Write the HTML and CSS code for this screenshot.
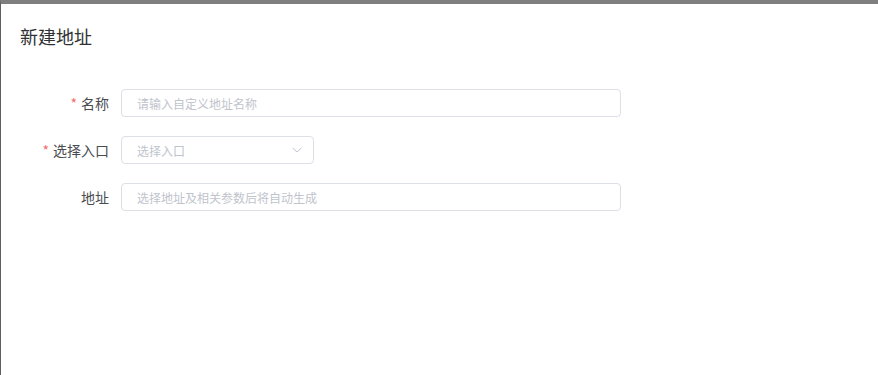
FILE: index.html
```html
<!DOCTYPE html>
<html lang="zh-CN">
  <head>
    <meta charset="UTF-8" />
    <title>新建地址</title>
    <link rel="stylesheet" href="styles.css">
  </head>
  <body>
    <div class="dialog">
      <div class="dialog-header">新建地址</div>
      <div class="dialog-body">
        <div class="form-item">
          <label class="form-label required">名称</label>
          <div class="input input-wide">
            <span class="placeholder">请输入自定义地址名称</span>
          </div>
        </div>

        <div class="form-item">
          <label class="form-label required">选择入口</label>
          <div class="input input-select">
            <span class="placeholder">选择入口</span>
            <svg class="arrow" width="12" height="12" viewBox="0 0 12 12">
              <polyline points="1.5,4 6,8 10.5,4" fill="none" stroke="#c0c4cc" stroke-width="1" />
            </svg>
          </div>
        </div>

        <div class="form-item">
          <label class="form-label">地址</label>
          <div class="input input-wide">
            <span class="placeholder">选择地址及相关参数后将自动生成</span>
          </div>
        </div>
      </div>
    </div>
  </body>
</html>
```

FILE: styles.css
```css
* {
  box-sizing: border-box;
  margin: 0;
  padding: 0;
}

html,
body {
  height: 100%;
}

body {
  font-family: "Noto Sans CJK SC", "Noto Sans", sans-serif;
  background: #ffffff;
  color: #303133;
}

.dialog {
  height: 100%;
  background: #ffffff;
  border-top: 4px solid #7f7f7f;
  border-left: 1px solid #5e5e5e;
}

.dialog-header {
  padding: 20px 19px;
  font-size: 18px;
  line-height: 24px;
  color: #303133;
}

.dialog-body {
  padding-top: 21px;
}

.form-item {
  display: flex;
  align-items: center;
  margin-bottom: 19px;
}

.form-label {
  width: 120px;
  padding-right: 12px;
  text-align: right;
  font-size: 14px;
  line-height: 28px;
  color: #4a4c50;
}

.form-label.required::before {
  content: "*";
  color: #f56c6c;
  margin-right: 4px;
}

.input {
  display: flex;
  align-items: center;
  height: 28px;
  padding: 0 15px;
  border: 1px solid #dcdfe6;
  border-radius: 4px;
  background: #ffffff;
}

.input-wide {
  width: 500px;
}

.input-select {
  width: 193px;
  justify-content: space-between;
  padding-right: 10px;
}

.placeholder {
  font-size: 12px;
  color: #c0c4cc;
}

.arrow {
  display: block;
}
```
